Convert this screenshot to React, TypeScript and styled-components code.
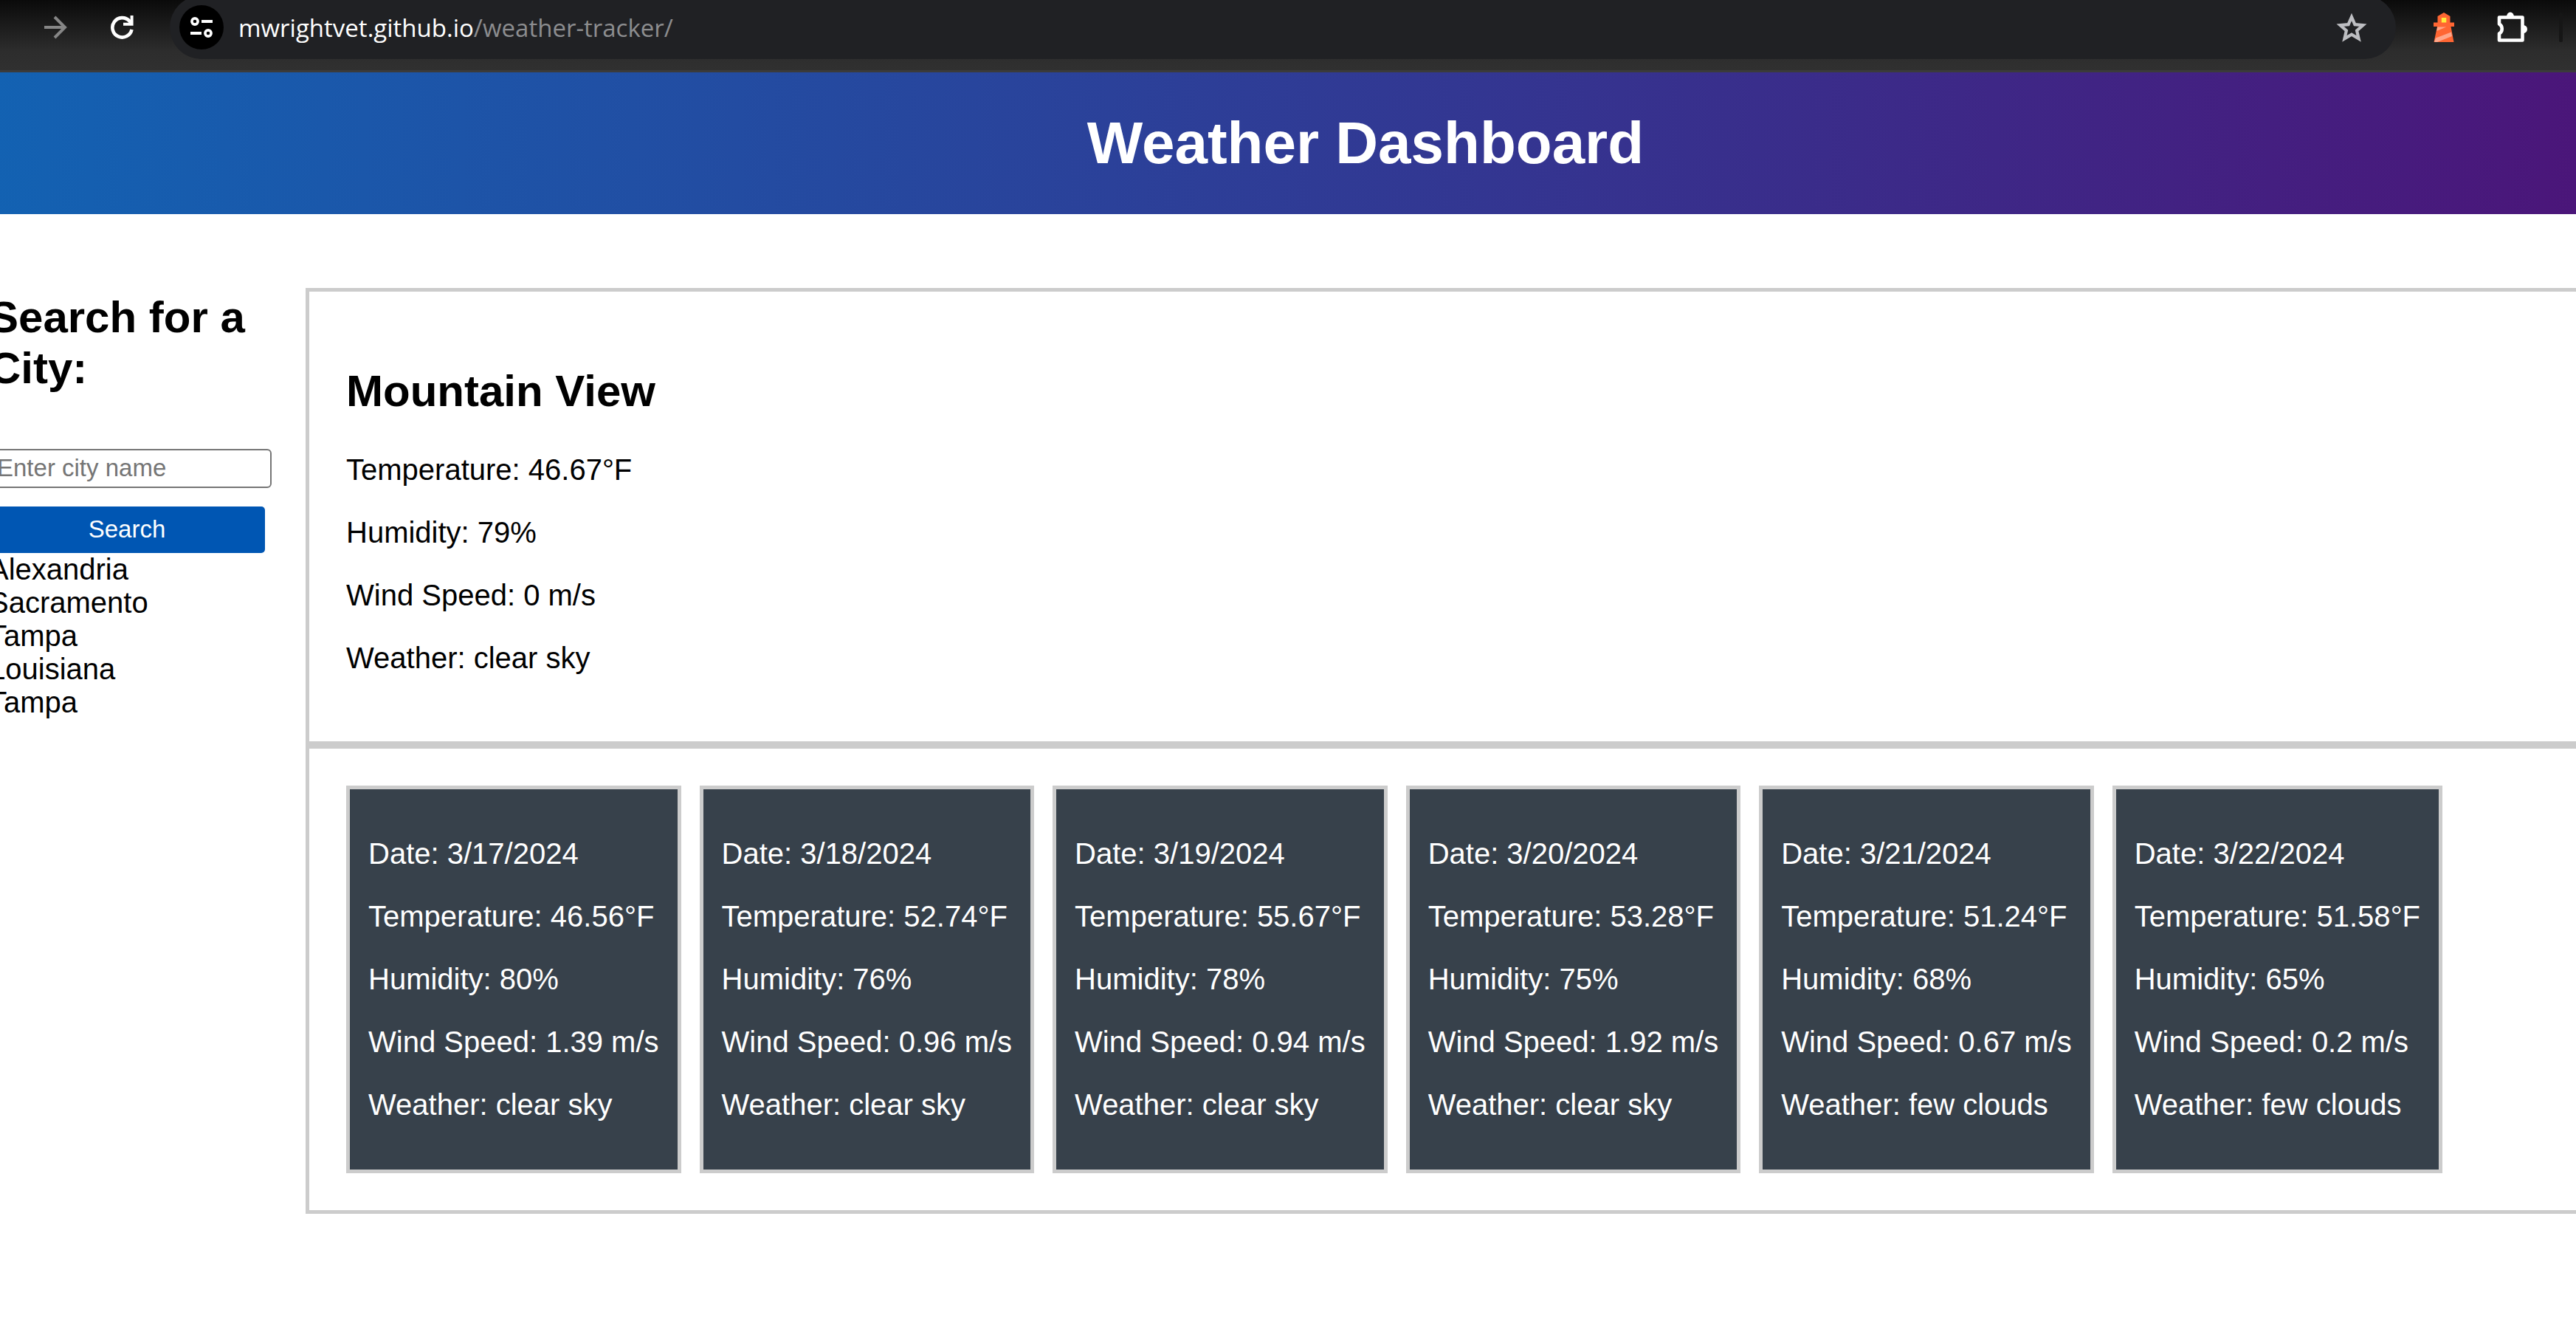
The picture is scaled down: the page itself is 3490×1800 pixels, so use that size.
import React from "react";
import styled, { createGlobalStyle } from "styled-components";

const GlobalStyle = createGlobalStyle`
  *, *::before, *::after { box-sizing: border-box; }
  body {
    margin: 0;
    background: #fff;
    color: #000;
    font-family: "Liberation Sans", Arial, Helvetica, sans-serif;
    font-size: 40px;
    line-height: 45px;
  }
`;

const Screen = styled.div`
  overflow: hidden;
`;

/* Browser toolbar */
const Toolbar = styled.div`
  display: flex;
  align-items: center;
  gap: 35px;
  margin-top: -6px;
  padding: 0 18px 15px 0;
  border-bottom: 3px solid #3b3b3b;
  background: linear-gradient(to bottom, #0a0a0a 6px, #2d2d2d 76px, #303030);
`;

const NavButtons = styled.nav`
  display: flex;
  gap: 30px;
  margin-left: -45px;
`;

const IconButton = styled.button<{ $tone?: string }>`
  display: flex;
  align-items: center;
  justify-content: center;
  width: 60px;
  height: 60px;
  padding: 0;
  border: 0;
  border-radius: 50%;
  background: transparent;
  color: ${(p) => p.$tone ?? "#fff"};
`;

const AddressBar = styled.div`
  flex: 1;
  display: flex;
  align-items: center;
  gap: 20px;
  height: 86px;
  padding: 0 30px 0 13px;
  border-radius: 43px;
  background: #202124;
`;

const SiteInfo = styled(IconButton)`
  background: #000;
`;

const Address = styled.a`
  flex: 1;
  color: #8c8d8f;
  font-family: "Open Sans", "Noto Sans", sans-serif;
  font-size: 33px;
  text-decoration: none;
`;

const Host = styled.span`
  color: #fff;
`;

const Extensions = styled.div`
  display: flex;
  align-items: center;
  gap: 33px;
`;

const Divider = styled.span`
  width: 5px;
  height: 40px;
  border-radius: 2px;
  background: #161616;
`;

/* Web page, wider than the window on both sides */
const Page = styled.div`
  margin: 0 -275px 0 -65px;
`;

const Banner = styled.header`
  padding: 50px;
  background: linear-gradient(to right, #1263b3, #4f1075);
  color: #fff;
  text-align: center;
`;

const Title = styled.h1`
  margin: 0;
  font-size: 80px;
  line-height: 92px;
`;

const Content = styled.main`
  display: grid;
  grid-template-columns: 374px 1fr;
  align-items: start;
  gap: 55px;
  padding: 100px 50px;
`;

const Sidebar = styled.aside`
  padding-top: 5px;
`;

const Heading = styled.h2<{ $top?: number }>`
  margin: ${(p) => p.$top ?? 0}px 0 50px;
  font-size: 60px;
  line-height: 69px;
`;

const SearchForm = styled.form`
  display: flex;
  flex-direction: column;
  gap: 25px;
  padding-top: 25px;
`;

const CityInput = styled.input`
  width: calc(100% + 9px);
  height: 53px;
  padding: 0 9px 2px;
  border: 2px solid #767676;
  border-radius: 6px;
  background: #fff;
  font-family: inherit;
  font-size: 33px;
  &::placeholder { color: #757575; opacity: 1; }
`;

const SearchButton = styled.button`
  height: 63px;
  padding: 0 0 2px;
  border: 0;
  border-radius: 5px;
  background: #0056b3;
  color: #fff;
  font-family: inherit;
  font-size: 33px;
`;

const History = styled.ul`
  margin: 0;
  padding: 0;
  list-style: none;
`;

const Panel = styled.section`
  padding: 50px;
  border: 5px solid #ccc;
`;

const Cards = styled.div`
  display: flex;
  gap: 25px;
`;

const Card = styled.article`
  padding: 25px;
  border: 5px solid #ccc;
  background: #37414b;
  color: #fff;
`;

const Reading = styled.p`
  margin: 40px 0;
  white-space: nowrap;
`;

const Arrow = ({ flip }: { flip?: boolean }) => (
  <svg width="32" height="32" viewBox="0 0 32 32" fill="none" stroke="currentColor" strokeWidth="4">
    <g transform={flip ? "matrix(-1 0 0 1 32 0)" : undefined}>
      <path d="M1 16h27M15 2l14 14-14 14" />
    </g>
  </svg>
);

const Reload = () => (
  <svg width="34" height="34" viewBox="0 0 34 34" fill="none" stroke="currentColor" strokeWidth="4.6">
    <path d="M30.5 20A13.2 13.2 0 1 1 27.3 8.4L30 12" />
    <path d="M30.6 1v11.8H19" strokeWidth="4" />
  </svg>
);

const Tune = () => (
  <svg width="32" height="30" viewBox="0 0 32 30" fill="none" stroke="currentColor" strokeWidth="3.6">
    <circle cx="7" cy="7" r="4.1" />
    <path d="M16 7h15M1 23h15" strokeWidth="4" />
    <circle cx="25" cy="23" r="4.1" />
  </svg>
);

const Star = () => (
  <svg width="42" height="40" viewBox="0 0 42 40" fill="none" stroke="currentColor" strokeWidth="4.2">
    <path d="M21 6l4.4 10.2 11 1-8.3 7.3 2.5 10.9L21 29.6l-9.6 5.8 2.5-10.9-8.3-7.3 11-1z" />
  </svg>
);

const Lighthouse = () => (
  <svg width="28" height="40" viewBox="0 0 28 40">
    <path fill="#ff6633" d="M14 0l8.500 5v8.500H28V19h-4.500L27.500 40H.5L5 19H0v-5.500h5.500V5z" />
    <path fill="#ffeb3b" d="M10.800 7h6.500v6.500h-6.500z" />
    <path fill="#ffa68a" d="M5.200 19.500h12L4.200 25zM2.800 34.500L24 26.500l1 5.500L5 40H1z" />
  </svg>
);

const Puzzle = () => (
  <svg width="44" height="44" viewBox="0 0 44 44">
    <path
      fill="none"
      stroke="currentColor"
      strokeWidth="4.600"
      strokeLinejoin="round"
      d="M4 8.500h31.500v31H4V30.500a7.500 7.500 0 0 0 0-13z"
    />
    <path fill="currentColor" d="M14 7.500a5 6 0 0 1 10 0zM36.500 19a5.500 5.500 0 0 1 0 11z" />
  </svg>
);

const history = ["Alexandria", "Sacramento", "Tampa", "Louisiana", "Tampa"];

const current = ["Temperature: 46.67°F", "Humidity: 79%", "Wind Speed: 0 m/s", "Weather: clear sky"];

const forecast = [
  { date: "3/17/2024", temp: "46.56", humidity: 80, wind: "1.39", sky: "clear sky" },
  { date: "3/18/2024", temp: "52.74", humidity: 76, wind: "0.96", sky: "clear sky" },
  { date: "3/19/2024", temp: "55.67", humidity: 78, wind: "0.94", sky: "clear sky" },
  { date: "3/20/2024", temp: "53.28", humidity: 75, wind: "1.92", sky: "clear sky" },
  { date: "3/21/2024", temp: "51.24", humidity: 68, wind: "0.67", sky: "few clouds" },
  { date: "3/22/2024", temp: "51.58", humidity: 65, wind: "0.2", sky: "few clouds" },
];

export default function App() {
  return (
    <Screen>
      <GlobalStyle />
      <Toolbar>
        <NavButtons>
          <IconButton $tone="#868686" aria-label="Back"><Arrow flip /></IconButton>
          <IconButton $tone="#868686" aria-label="Forward"><Arrow /></IconButton>
          <IconButton aria-label="Reload"><Reload /></IconButton>
        </NavButtons>
        <AddressBar>
          <SiteInfo aria-label="Site information"><Tune /></SiteInfo>
          <Address href="#"><Host>mwrightvet.github.io</Host>/weather-tracker/</Address>
          <IconButton $tone="#bdbec2" aria-label="Bookmark"><Star /></IconButton>
        </AddressBar>
        <Extensions>
          <IconButton aria-label="Lighthouse"><Lighthouse /></IconButton>
          <IconButton aria-label="Extensions"><Puzzle /></IconButton>
          <Divider />
        </Extensions>
      </Toolbar>
      <Page>
        <Banner>
          <Title>Weather Dashboard</Title>
        </Banner>
        <Content>
          <Sidebar>
            <Heading><label htmlFor="city">Search for a City:</label></Heading>
            <SearchForm onSubmit={(e) => e.preventDefault()}>
              <CityInput id="city" type="text" placeholder="Enter city name" />
              <SearchButton type="submit">Search</SearchButton>
            </SearchForm>
            <History>
              {history.map((city, i) => (
                <li key={i}>{city}</li>
              ))}
            </History>
          </Sidebar>
          <div>
            <Panel>
              <Heading $top={50}>Mountain View</Heading>
              {current.map((line) => (
                <Reading key={line}>{line}</Reading>
              ))}
            </Panel>
            <Panel>
              <Cards>
                {forecast.map((day) => (
                  <Card key={day.date}>
                    <Reading>Date: {day.date}</Reading>
                    <Reading>Temperature: {day.temp}°F</Reading>
                    <Reading>Humidity: {day.humidity}%</Reading>
                    <Reading>Wind Speed: {day.wind} m/s</Reading>
                    <Reading>Weather: {day.sky}</Reading>
                  </Card>
                ))}
              </Cards>
            </Panel>
          </div>
        </Content>
      </Page>
    </Screen>
  );
}
